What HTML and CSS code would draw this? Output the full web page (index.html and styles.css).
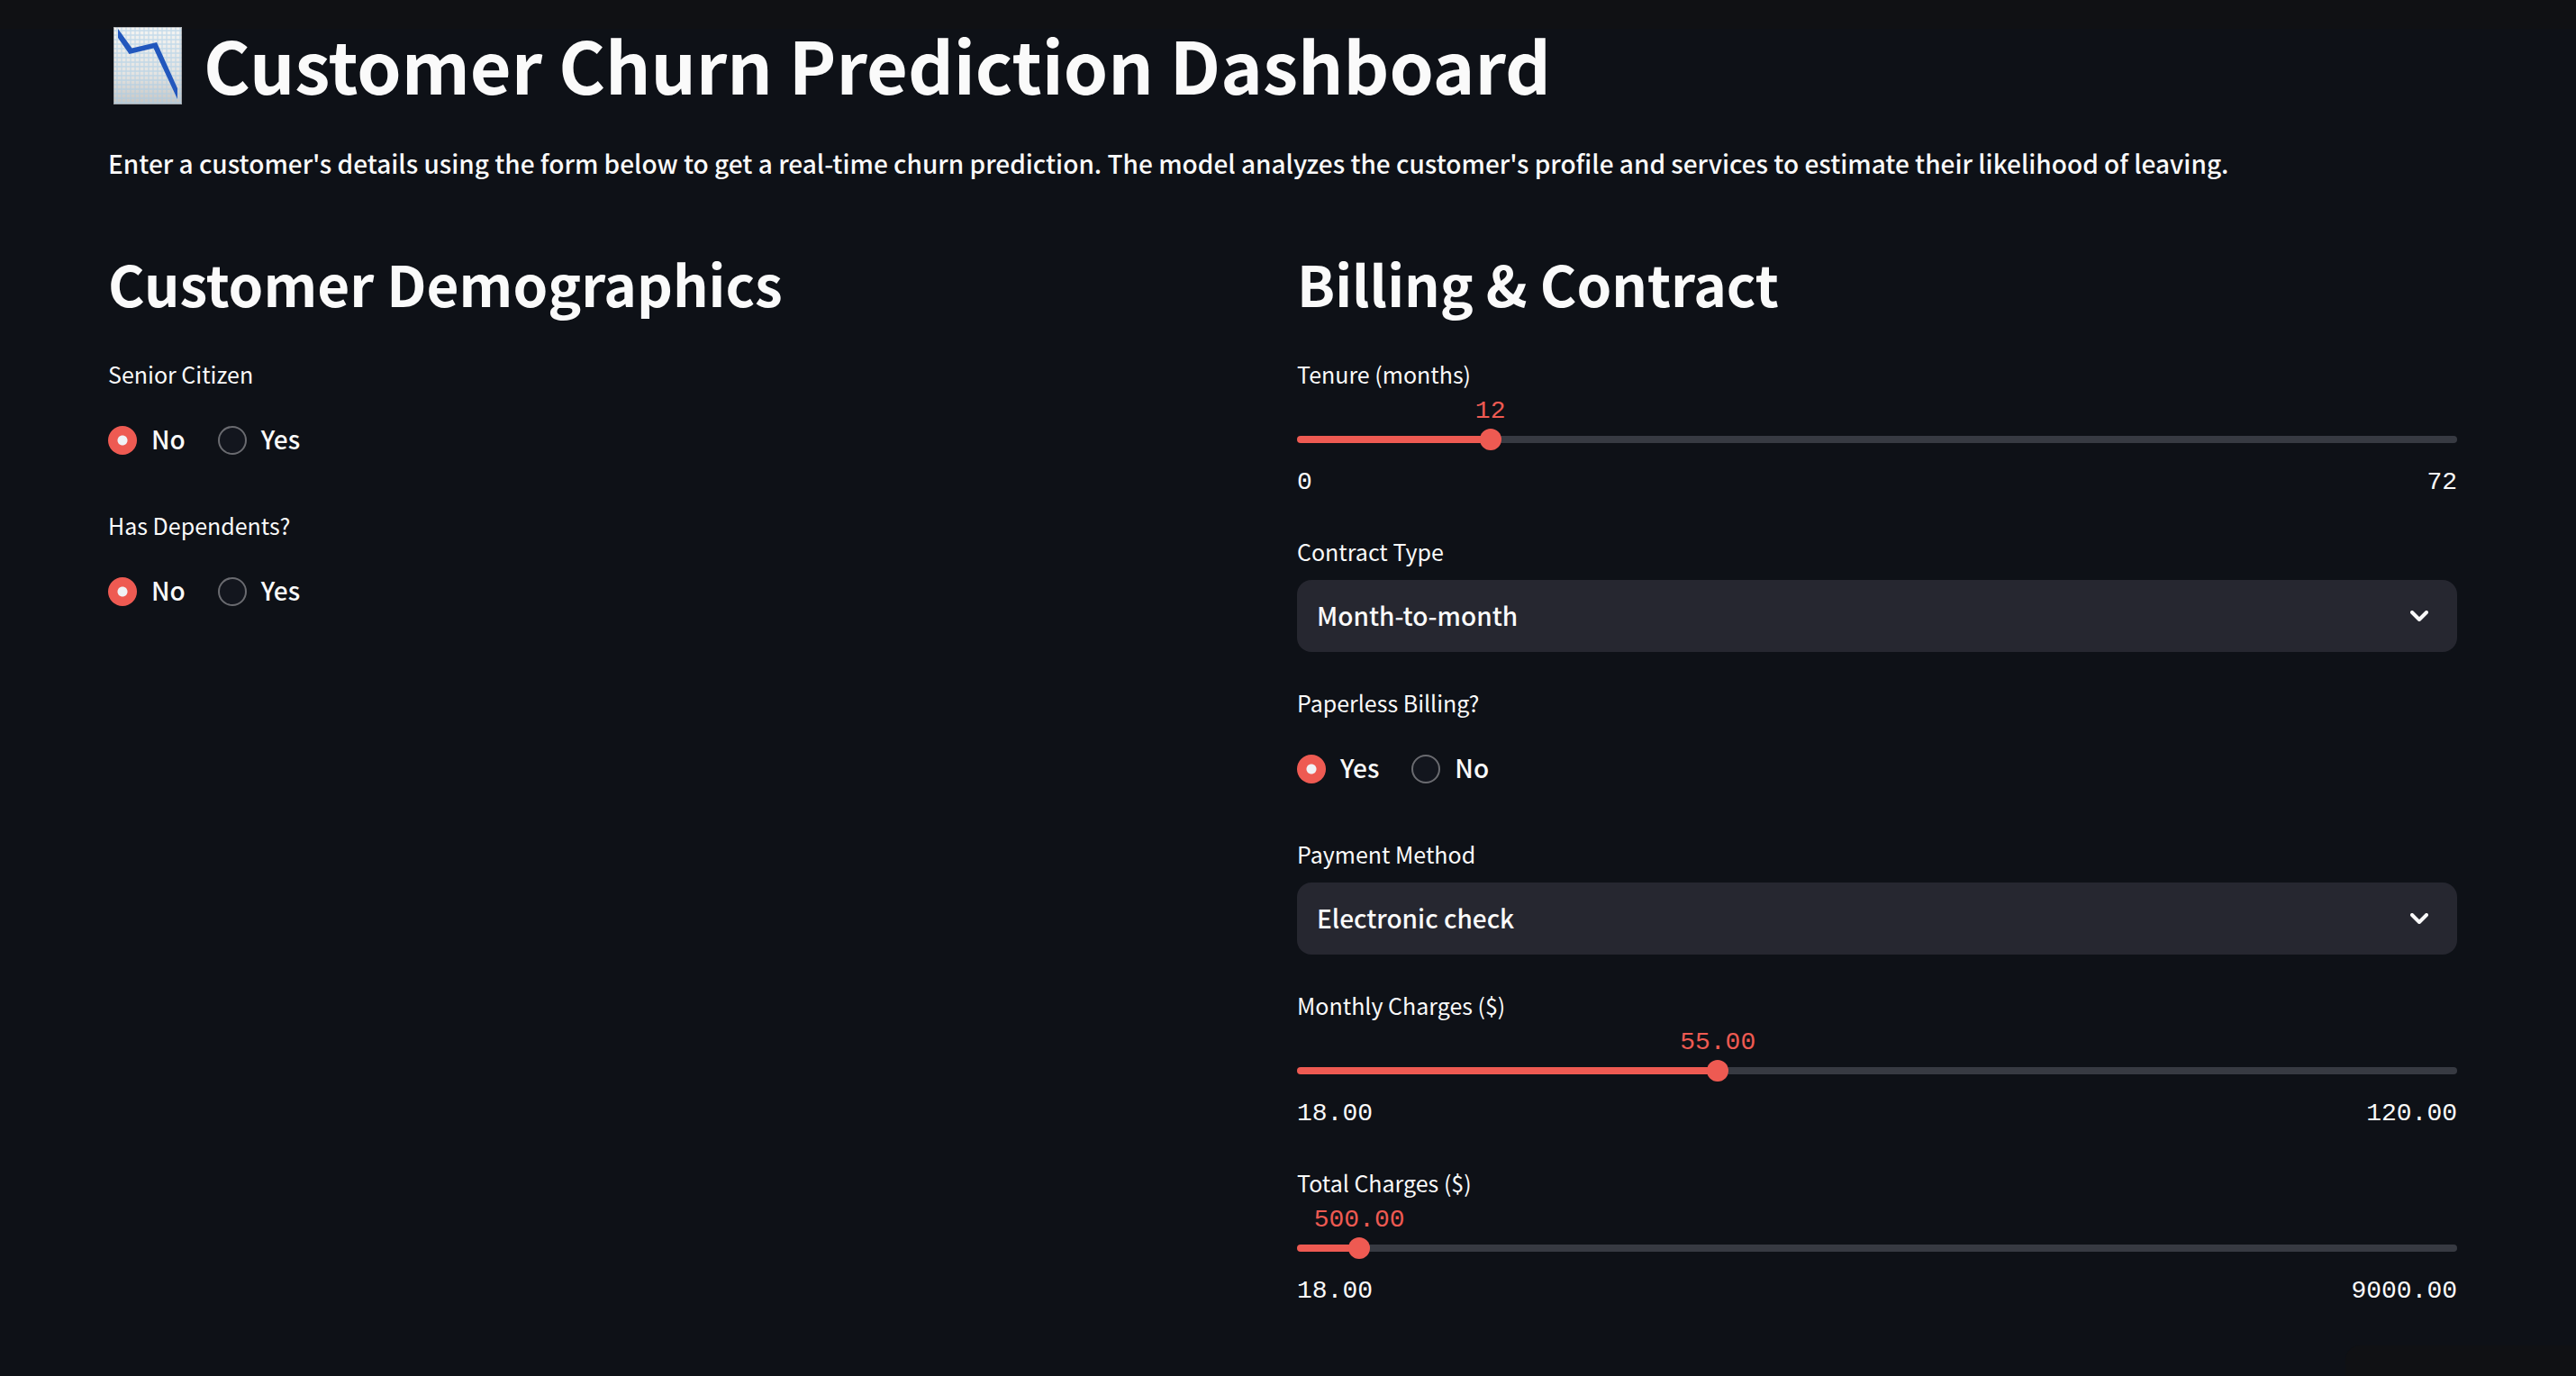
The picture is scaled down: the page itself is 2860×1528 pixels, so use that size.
FILE: index.html
```html
<!DOCTYPE html>
<html lang="en">
<head>
<meta charset="utf-8">
<meta name="viewport" content="width=device-width, initial-scale=1">
<title>Customer Churn Prediction Dashboard</title>
<link rel="stylesheet" href="styles.css">
</head>
<body>
<header class="toolbar"></header>
<main class="page">
  <h1 class="title">
    <svg class="title-icon" viewBox="0 0 76 86" aria-hidden="true">
      <defs>
        <linearGradient id="paper" x1="0" y1="0" x2="0" y2="1">
          <stop offset="0" stop-color="#f4f4f2"/>
          <stop offset="0.6" stop-color="#e4e4e2"/>
          <stop offset="1" stop-color="#c6c6c4"/>
        </linearGradient>
        <pattern id="grid" x="3" y="3" width="5" height="5" patternUnits="userSpaceOnUse">
          <path d="M0 1H5M1 0V5" stroke="#a9cbe6" stroke-width="1.3" stroke-opacity="0.6"/>
        </pattern>
      </defs>
      <rect width="76" height="86" fill="url(#paper)"/>
      <rect width="76" height="86" fill="url(#grid)"/>
      <rect x="0.5" y="0.5" width="75" height="85" fill="none" stroke="#8c9096" stroke-opacity="0.6"/>
      <path d="M5 2L20.500 23.500L48 17L71 68V80L44.500 23.500L17.500 30L5 12Z" fill="#2257bd"/>
    </svg>
    <span>Customer Churn Prediction Dashboard</span>
  </h1>
  <p class="intro">Enter a customer's details using the form below to get a real-time churn prediction. The model analyzes the customer's profile and services to estimate their likelihood of leaving.</p>

  <form class="columns">
    <section class="column">
      <h2 class="heading">Customer Demographics</h2>
      <fieldset class="field">
        <legend class="label">Senior Citizen</legend>
        <div class="radios">
          <label class="radio"><input type="radio" name="senior" checked>No</label>
          <label class="radio"><input type="radio" name="senior">Yes</label>
        </div>
      </fieldset>
      <fieldset class="field">
        <legend class="label">Has Dependents?</legend>
        <div class="radios">
          <label class="radio"><input type="radio" name="dependents" checked>No</label>
          <label class="radio"><input type="radio" name="dependents">Yes</label>
        </div>
      </fieldset>
    </section>

    <section class="column">
      <h2 class="heading">Billing &amp; Contract</h2>
      <div class="field">
        <label class="label" for="tenure">Tenure (months)</label>
        <div class="slider" style="--fill: 16.667%">
          <output class="slider-value" for="tenure">12</output>
          <div class="slider-track"><input id="tenure" type="range" min="0" max="72" value="12"></div>
          <div class="slider-range"><span>0</span><span>72</span></div>
        </div>
      </div>
      <div class="field">
        <label class="label" for="contract">Contract Type</label>
        <div class="select">
          <select id="contract"><option>Month-to-month</option><option>One year</option><option>Two year</option></select>
          <svg class="chevron" viewBox="0 0 20 12" aria-hidden="true"><path d="M2 2L10 10L18 2"/></svg>
        </div>
      </div>
      <fieldset class="field">
        <legend class="label">Paperless Billing?</legend>
        <div class="radios">
          <label class="radio"><input type="radio" name="paperless" checked>Yes</label>
          <label class="radio"><input type="radio" name="paperless">No</label>
        </div>
      </fieldset>
      <div class="field">
        <label class="label" for="payment">Payment Method</label>
        <div class="select">
          <select id="payment"><option>Electronic check</option><option>Mailed check</option><option>Bank transfer</option><option>Credit card</option></select>
          <svg class="chevron" viewBox="0 0 20 12" aria-hidden="true"><path d="M2 2L10 10L18 2"/></svg>
        </div>
      </div>
      <div class="field">
        <label class="label" for="monthly">Monthly Charges ($)</label>
        <div class="slider" style="--fill: 36.275%">
          <output class="slider-value" for="monthly">55.00</output>
          <div class="slider-track"><input id="monthly" type="range" min="18" max="120" value="55"></div>
          <div class="slider-range"><span>18.00</span><span>120.00</span></div>
        </div>
      </div>
      <div class="field">
        <label class="label" for="total">Total Charges ($)</label>
        <div class="slider" style="--fill: 5.366%">
          <output class="slider-value" for="total">500.00</output>
          <div class="slider-track"><input id="total" type="range" min="18" max="9000" value="500"></div>
          <div class="slider-range"><span>18.00</span><span>9000.00</span></div>
        </div>
      </div>
    </section>
  </form>
</main>
<div class="corner-panel"></div>
</body>
</html>
```

FILE: styles.css
```css
:root {
  --bg: #0e1117;
  --bar: #101114;
  --text: #fafafa;
  --accent: #ee5a52;
  --track: #373a42;
  --surface: #262730;
}

* {
  box-sizing: border-box;
}

body {
  margin: 0;
  min-height: 100vh;
  background: var(--bg);
  color: var(--text);
  font-family: "Noto Sans CJK SC", "Noto Sans", sans-serif;
  font-size: 28px;
  font-weight: 500;
  line-height: 48px;
}

.toolbar {
  height: 32px;
  background: var(--bar);
}

.corner-panel {
  position: fixed;
  right: 0;
  bottom: 0;
  width: 256px;
  height: 34px;
  border-top-left-radius: 16px;
  background: var(--bar);
}

.page {
  padding: 0 132px 32px 120px;
}

.title {
  display: flex;
  align-items: center;
  gap: 24px;
  margin: -12px 0 0 6px;
  font-size: 79px;
  font-weight: 700;
  line-height: 102px;
}

.title span {
  padding-bottom: 4px;
}

.title-icon {
  flex: none;
  width: 76px;
  height: 86px;
}

.intro {
  margin: 31px 0 64px;
}

.columns {
  display: grid;
  grid-template-columns: 1fr 1fr;
  gap: 32px;
}

.column {
  display: flex;
  flex-direction: column;
  gap: 32px;
  min-width: 0;
}

.heading {
  margin: 0;
  font-size: 62px;
  font-weight: 700;
  line-height: 90px;
}

.field {
  display: flow-root;
  min-width: 0;
  margin: 0;
  padding: 0;
  border: 0;
}

.label {
  display: block;
  padding: 0 0 8px;
  font-size: 25px;
  font-weight: 400;
  line-height: 48px;
}

.radios {
  display: flex;
  align-items: center;
  gap: 36px;
  height: 80px;
}

.radio {
  display: flex;
  align-items: center;
  gap: 16px;
}

.radio input {
  appearance: none;
  width: 32px;
  height: 32px;
  margin: 4px 0 0;
  border: 2px solid #6a6b70;
  border-radius: 50%;
  background: #13161e;
}

.radio input:checked {
  border: 0;
  background: radial-gradient(circle, #f0f2f6 5px, var(--accent) 6px);
}

.select {
  display: grid;
  align-items: center;
}

.select select,
.chevron {
  grid-area: 1 / 1;
}

.select select {
  appearance: none;
  width: 100%;
  height: 80px;
  padding: 0 80px 2px 22px;
  border: 0;
  border-radius: 16px;
  background: var(--surface);
  color: inherit;
  font: inherit;
}

.chevron {
  justify-self: end;
  width: 20px;
  height: 12px;
  margin-right: 32px;
  fill: none;
  stroke: var(--text);
  stroke-width: 4;
  stroke-linecap: round;
  stroke-linejoin: round;
  pointer-events: none;
}

.slider {
  position: relative;
  padding-top: 37px;
  font-family: "Liberation Mono", monospace;
  font-size: 28px;
  font-weight: 400;
  line-height: 40px;
}

.slider-value {
  position: absolute;
  top: -10px;
  left: var(--fill);
  transform: translateX(-50%);
  color: var(--accent);
}

.slider-track {
  height: 8px;
  border-radius: 4px;
  background: linear-gradient(to right, var(--accent) var(--fill), var(--track) var(--fill));
}

.slider-track input {
  appearance: none;
  display: block;
  position: relative;
  top: -8px;
  width: calc(100% + 24px);
  height: 24px;
  margin: 0 -12px;
  background: none;
}

.slider-track input::-webkit-slider-thumb {
  appearance: none;
  width: 24px;
  height: 24px;
  border-radius: 50%;
  background: var(--accent);
}

.slider-range {
  display: flex;
  justify-content: space-between;
  padding-top: 24px;
}
```
